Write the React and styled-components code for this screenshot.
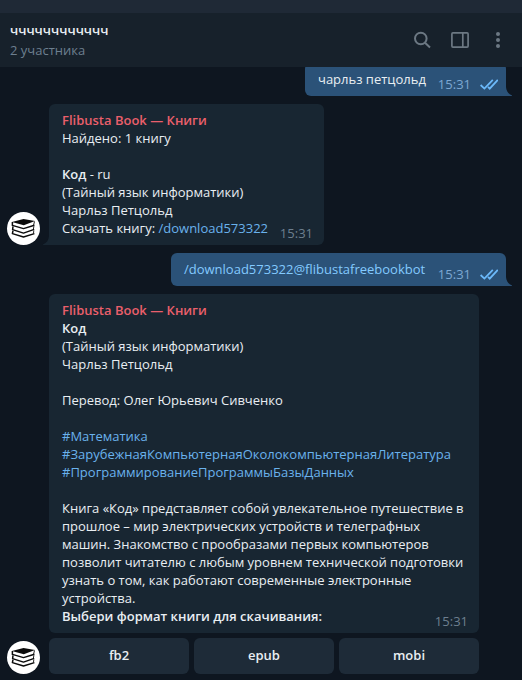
import React from 'react'
import styled, { createGlobalStyle } from 'styled-components'

const GlobalStyle = createGlobalStyle`
	:root {
		--background: #0e1620;
		--panel: #17212b;
		--bubble: #182632;
		--bubble-out: #2b5278;
		--link: #6ab2ed;
		--text: #e9eef2;
		--muted: #6d7f8f;
	}
	*, *::before, *::after {
		box-sizing: border-box;
	}
	body {
		margin: 0;
		background: var(--background);
		font-family: "Open Sans", sans-serif;
		font-size: 13px;
		line-height: 18px;
		color: var(--text);
	}
`

const Window = styled.div`
	display: flex;
	flex-direction: column;
	height: 680px;
	overflow: hidden;
`

const TitleBar = styled.div`
	flex: none;
	height: 13px;
	background: #1f2936;
`

const Header = styled.header`
	flex: none;
	display: flex;
	justify-content: space-between;
	height: 54px;
	padding: 8px 14px 0 10px;
	background: var(--panel);
	position: relative;
	z-index: 1;

	h1 {
		margin: 0;
		font-size: 13px;
		font-weight: 600;
		line-height: 18px;
	}

	p {
		margin: 2px 0 0;
		color: var(--muted);
	}
`

const Tools = styled.div`
	display: flex;
	gap: 18px;
	padding-top: 9px;
	color: #6c7883;

	svg {
		display: block;
	}
`

const Messages = styled.main`
	flex: 1;
	min-height: 0;
	display: flex;
	flex-direction: column;
	justify-content: flex-end;
	gap: 8px;
	padding: 0 16px 6px 7px;
	overflow: hidden;
`

const Row = styled.div`
	flex: none;
	display: flex;
	align-items: flex-end;
	justify-content: ${props => (props.$out ? 'flex-end' : 'flex-start')};
	gap: 9px;
`

const Bubble = styled.div`
	position: relative;
	width: ${props => props.$width}px;
	padding: 7px 12px 8px 13px;
	border-radius: 6px;
	border-bottom-left-radius: ${props => (props.$tail === 'left' ? 0 : 6)}px;
	border-bottom-right-radius: ${props => (props.$tail === 'right' ? 0 : 6)}px;
	background: ${props => (props.$out ? 'var(--bubble-out)' : 'var(--bubble)')};
	white-space: pre;
`

const Tail = styled.svg`
	position: absolute;
	bottom: 0;
	${props => (props.$side === 'right' ? 'left: 100%;' : 'right: 100%; transform: scaleX(-1);')}
	fill: ${props => (props.$side === 'right' ? 'var(--bubble-out)' : 'var(--bubble)')};
`

const Meta = styled.span`
	position: absolute;
	right: ${props => (props.$out ? 8 : 11)}px;
	bottom: 3px;
	display: flex;
	gap: 9px;
	color: ${props => (props.$out ? '#7da8d3' : 'var(--muted)')};
`

const Author = styled.div`
	font-weight: 600;
	color: #ea5f6b;
`

const Bold = styled.b`
	font-weight: 600;
`

const Link = styled.a`
	color: ${props => (props.$out ? '#83caff' : 'var(--link)')};
	text-decoration: none;
`

const Line = styled.div`
	min-height: 18px;
`

const Picture = styled.svg`
	flex: none;
	display: block;
	width: 33px;
	height: 33px;
`

const Column = styled.div`
	display: flex;
	flex-direction: column;
	gap: 5px;
	width: 430px;
`

const Keyboard = styled.div`
	display: grid;
	grid-template-columns: repeat(3, 1fr);
	gap: 5px;
`

const Key = styled.button`
	height: 36px;
	padding: 0 0 2px;
	border: 0;
	border-radius: 6px;
	background: #1e2b38;
	color: var(--text);
	font: 600 13px/18px "Open Sans", sans-serif;
`

function Avatar() {
	return (
		<Picture viewBox="0 0 33 33">
			<circle cx="16.5" cy="16.5" r="16.5" fill="#fff" />
			<path d="M4.9 9.9L16.5 7L28 9L16.8 13.2Z" fill="#0a0a0a" />
			<g fill="none" stroke="#0a0a0a" strokeWidth="1.5" strokeLinejoin="round">
				<path d="M5.4 10V13.4L16.5 16.6L27.4 13.2" />
				<path d="M6 14.4L5.6 17.6L16.5 21.1L27.2 17.4" />
				<path d="M6 18.6L5.4 21.6L16.5 25L27.4 21.6" />
				<path d="M27.5 9.5L26.6 13M26.9 14.2L26.4 17.2M26.8 18.4L26.5 21.4" strokeWidth=".9" />
			</g>
		</Picture>
	)
}

function Checks() {
	return (
		<svg width="18" height="18" viewBox="0 0 18 18" fill="none" stroke="#6cb9fa" strokeWidth="1.8">
			<path d="M.6 10L4.4 13.6L12.8 4.9" />
			<path d="M8 11.9L9.7 13.6L17.8 4.9" />
		</svg>
	)
}

function Message({ out, tail, width, children }) {
	return (
		<Bubble $out={out} $tail={tail} $width={width}>
			{children}
			{tail && (
				<Tail $side={tail} width="6" height="9" viewBox="0 0 6 9">
					<path d="M0 0C.3 4 2.2 7 6 8.4V9H0Z" />
				</Tail>
			)}
			<Meta $out={out}>
				15:31
				{out && <Checks />}
			</Meta>
		</Bubble>
	)
}

const description = [
	'Книга «Код» представляет собой увлекательное путешествие в',
	'прошлое – мир электрических устройств и телеграфных',
	'машин. Знакомство с прообразами первых компьютеров',
	'позволит читателю с любым уровнем технической подготовки',
	'узнать о том, как работают современные электронные',
	'устройства.',
]

const tags = [
	'#Математика',
	'#ЗарубежнаяКомпьютернаяОколокомпьютернаяЛитература',
	'#ПрограммированиеПрограммыБазыДанных',
]

export default function App() {
	return (
		<>
			<GlobalStyle />
			<Window>
				<TitleBar />
				<Header>
					<div>
						<h1>чччччччччччч</h1>
						<p>2 участника</p>
					</div>
					<Tools>
						<svg width="20" height="20" viewBox="0 0 20 20" fill="none" stroke="currentColor" strokeWidth="2">
							<circle cx="8.8" cy="8.5" r="5.8" />
							<path d="M13 12.7L18 17.5" />
						</svg>
						<svg width="20" height="20" viewBox="0 0 20 20" fill="none" stroke="currentColor" strokeWidth="1.7">
							<rect x="1.9" y="2.9" width="16.2" height="14.2" rx="1" />
							<path d="M12.8 3V17" />
						</svg>
						<svg width="20" height="20" viewBox="0 0 20 20" fill="currentColor">
							<circle cx="10" cy="4" r="2" />
							<circle cx="10" cy="10" r="2" />
							<circle cx="10" cy="16" r="2" />
						</svg>
					</Tools>
				</Header>
				<Messages>
					<Row $out>
						<Message out tail="right" width={201}>чарльз петцольд</Message>
					</Row>
					<Row>
						<Avatar />
						<Message tail="left" width={275}>
							<Author>Flibusta Book — Книги</Author>
							<Line>Найдено: 1 книгу</Line>
							<Line />
							<Line><Bold>Код</Bold> - ru</Line>
							<Line>(Тайный язык информатики)</Line>
							<Line>Чарльз Петцольд</Line>
							<Line>Скачать книгу: <Link>/download573322</Link></Line>
						</Message>
					</Row>
					<Row $out>
						<Message out tail="right" width={335}>
							<Link $out>/download573322@flibustafreebookbot</Link>
						</Message>
					</Row>
					<Row>
						<Avatar />
						<Column>
							<Message width={430}>
								<Author>Flibusta Book — Книги</Author>
								<Line><Bold>Код</Bold></Line>
								<Line>(Тайный язык информатики)</Line>
								<Line>Чарльз Петцольд</Line>
								<Line />
								<Line>Перевод: Олег Юрьевич Сивченко</Line>
								<Line />
								{tags.map(tag => <Line key={tag}><Link>{tag}</Link></Line>)}
								<Line />
								{description.map(line => <Line key={line}>{line}</Line>)}
								<Line><Bold>Выбери формат книги для скачивания:</Bold></Line>
							</Message>
							<Keyboard>
								<Key>fb2</Key>
								<Key>epub</Key>
								<Key>mobi</Key>
							</Keyboard>
						</Column>
					</Row>
				</Messages>
			</Window>
		</>
	)
}
